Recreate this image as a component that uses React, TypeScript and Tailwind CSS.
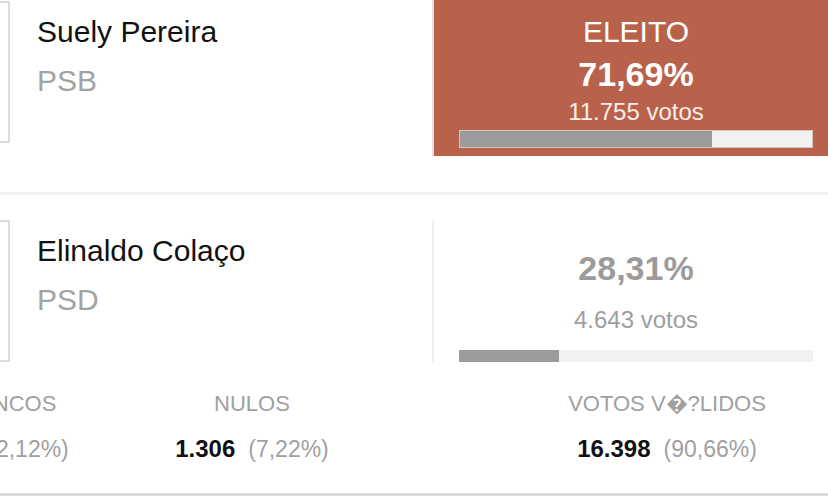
import React from "react";

type Candidate = {
  name: string;
  party: string;
  pct: string;
  share: number;
  votes: string;
  elected?: boolean;
};

const candidates: Candidate[] = [
  { name: "Suely Pereira", party: "PSB", pct: "71,69%", share: 71.69, votes: "11.755 votos", elected: true },
  { name: "Elinaldo Colaço", party: "PSD", pct: "28,31%", share: 28.31, votes: "4.643 votos" },
];

const stats = [
  { label: "BRANCOS", value: "383", pct: "(2,12%)", box: "ml-[-123px] w-[250px]" },
  { label: "NULOS", value: "1.306", pct: "(7,22%)", box: "w-[250px]" },
  { label: "VOTOS V\uFFFD?LIDOS", value: "16.398", pct: "(90,66%)", box: "ml-[165px] w-[250px]" },
];

const Info = ({ c }: { c: Candidate }) => (
  <div className="flex items-start">
    <div className="w-[110px] h-[142px] border-2 border-[#dcdcdc] bg-white shrink-0" />
    <div className="pl-[27px] pt-[14px]">
      <div className="text-[30px] leading-[34px] text-[#111]">{c.name}</div>
      <div className="mt-[15px] text-[30px] leading-[34px] text-[#a3a3a3]">{c.party}</div>
    </div>
  </div>
);

const Elected = ({ c }: { c: Candidate }) => (
  <div className="w-[406px] h-[156px] border-l-2 border-[#efdcd6] bg-[#b9624b] text-white text-center pt-[15px]">
    <div className="text-[30px] leading-[34px]">ELEITO</div>
    <div className="mt-[5px] text-[34px] leading-[40px] font-bold">{c.pct}</div>
    <div className="mt-[4px] text-[24px] leading-[28px] text-[#fbeeea]">{c.votes}</div>
    <div className="mx-[25px] mt-[4px] h-[18px] border border-[#d9c3bd] bg-[#f1f1f1] flex">
      <div className="h-full bg-[#9b9b9b]" style={{ width: `${c.share}%` }} />
    </div>
  </div>
);

const Runner = ({ c }: { c: Candidate }) => (
  <div className="w-[406px] h-[142px] border-l-2 border-[#f0f0f0] text-center pt-[28px]">
    <div className="text-[34px] leading-[40px] font-bold text-[#9b9b9b]">{c.pct}</div>
    <div className="mt-[18px] text-[24px] leading-[28px] text-[#9e9e9e]">{c.votes}</div>
    <div className="mx-[25px] mt-[16px] h-[12px] bg-[#f1f1f1] flex">
      <div className="h-full bg-[#9b9b9b]" style={{ width: `${c.share}%` }} />
    </div>
  </div>
);

export default function App() {
  return (
    <div className="w-[828px] h-[503px] overflow-hidden bg-white font-['Liberation_Sans',Arial,sans-serif]">
      <div className="ml-[-100px] w-[938px]">
        <div className="h-[192px] flex justify-between items-start">
          <div className="pt-[1px]">
            <Info c={candidates[0]} />
          </div>
          <Elected c={candidates[0]} />
        </div>
        <div className="h-[3px] bg-[#f1f1f1]" />
        <div className="pt-[25px] flex justify-between items-start">
          <Info c={candidates[1]} />
          <Runner c={candidates[1]} />
        </div>
      </div>
      <div className="flex mt-[29px]">
        {stats.map((s) => (
          <div key={s.label} className={`${s.box} shrink-0 text-center`}>
            <div className="text-[22px] leading-[26px] text-[#a0a0a0] whitespace-nowrap">{s.label}</div>
            <div className="mt-[19px] leading-[26px] whitespace-nowrap">
              <span className="text-[24px] font-bold text-[#111]">{s.value}</span>
              <span className="ml-[13px] text-[23px] text-[#a0a0a0]">{s.pct}</span>
            </div>
          </div>
        ))}
      </div>
      <div className="mt-[28px] h-[3px] bg-[#dadada]" />
    </div>
  );
}
